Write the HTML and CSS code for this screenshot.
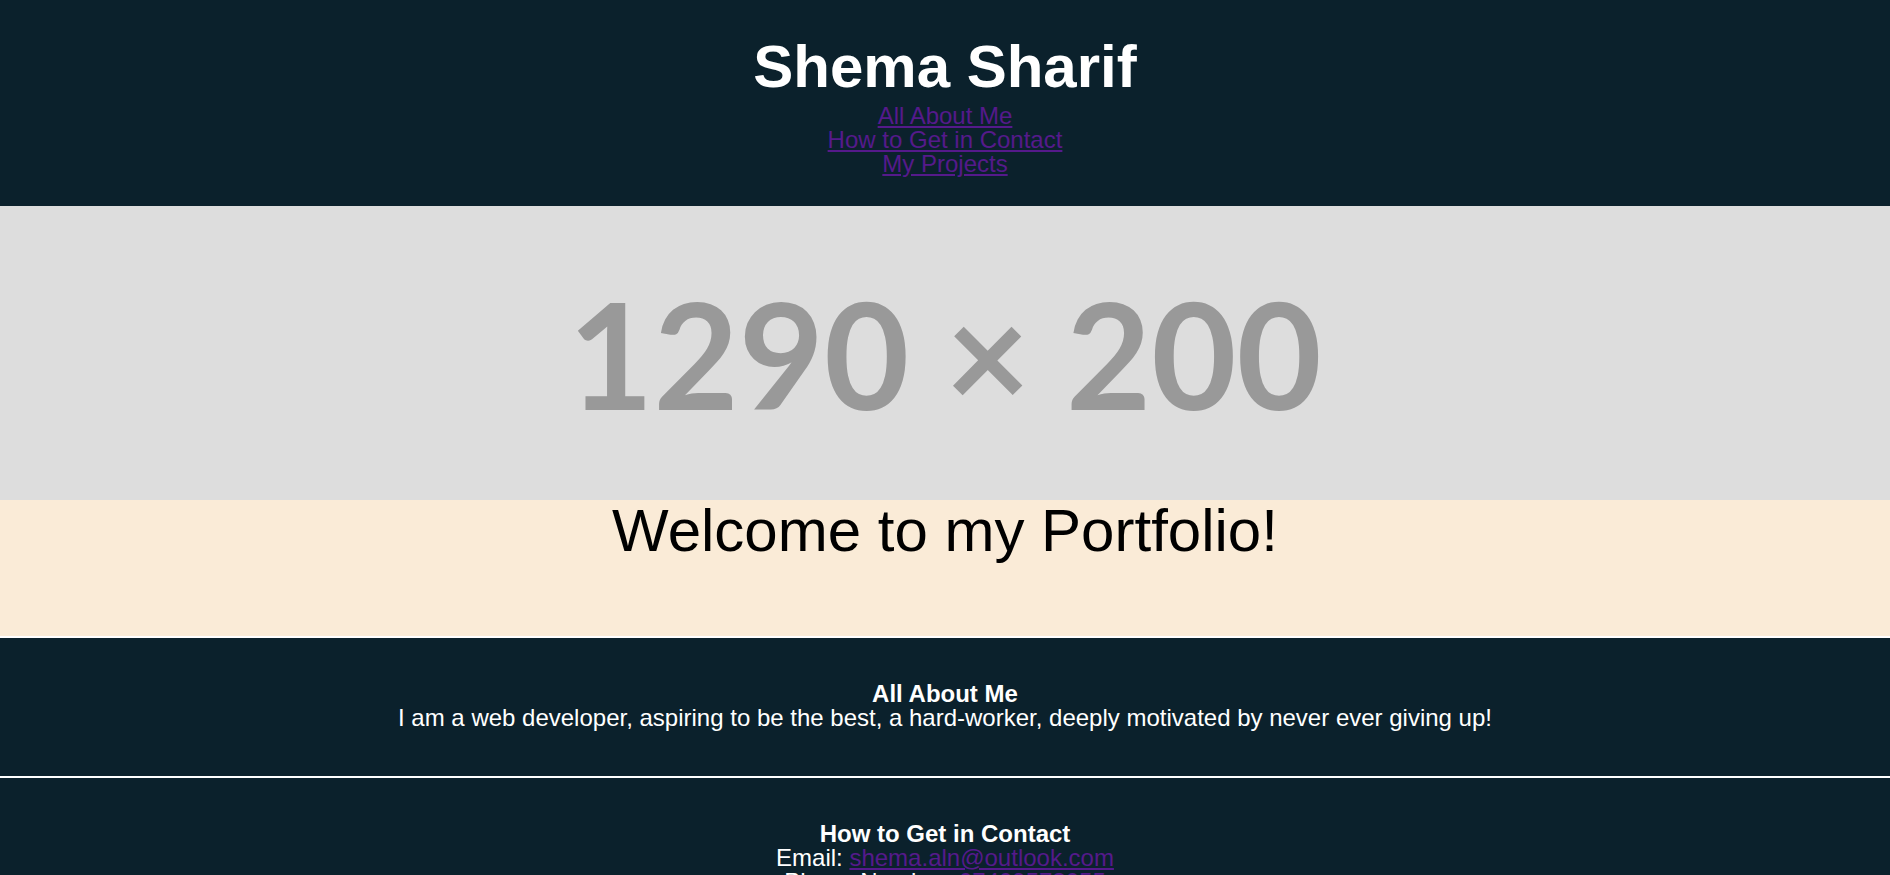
FILE: index.html
```html
<!DOCTYPE html>
<html lang="en">
<head>
<meta charset="utf-8">
<title>Shema Sharif</title>
<link rel="stylesheet" href="styles.css">
</head>
<body>
<header class="site-header">
  <h1 class="site-title">Shema Sharif</h1>
  <nav class="site-nav">
    <a class="nav-link" href="#about">All About Me</a>
    <a class="nav-link" href="#contact">How to Get in Contact</a>
    <a class="nav-link" href="#projects">My Projects</a>
  </nav>
</header>
<div class="banner"><span class="banner-text">1290 × 200</span></div>
<section class="welcome">
  <h2 class="welcome-title">Welcome to my Portfolio!</h2>
</section>
<section class="panel" id="about">
  <h3 class="panel-title">All About Me</h3>
  <p class="panel-text">I am a web developer, aspiring to be the best, a hard-worker, deeply motivated by never ever giving up!</p>
</section>
<section class="panel" id="contact">
  <h3 class="panel-title">How to Get in Contact</h3>
  <p class="panel-text">Email: <a class="panel-link" href="#">shema.aln@outlook.com</a></p>
  <p class="panel-text">Phone Number: <a class="panel-link" href="#">07409573055</a></p>
</section>
<section class="panel" id="projects">
  <h3 class="panel-title">My Projects</h3>
</section>
</body>
</html>
```

FILE: styles.css
```css
html, body {
  margin: 0;
  padding: 0;
}
body {
  font-family: "Liberation Sans", Arial, sans-serif;
  font-size: 24px;
  line-height: 1;
  color: #ffffff;
  background: #0b212c;
  text-align: center;
}
.site-header {
  background: #0b212c;
  padding: 37px 0 30px;
}
.site-title {
  margin: 0;
  font-size: 60px;
  line-height: 60px;
  font-weight: bold;
  color: #ffffff;
}
.site-nav {
  margin-top: 7px;
  display: flex;
  flex-direction: column;
  align-items: center;
}
.nav-link, .panel-link {
  color: #551a8b;
  text-decoration: underline;
}
.banner {
  background: #dddddd;
  height: 294px;
  width: 100%;
  display: flex;
  align-items: center;
  justify-content: center;
}
.banner-text {
  font-family: Lato, sans-serif;
  font-weight: bold;
  font-size: 147px;
  line-height: 1;
  color: #999999;
}
.welcome {
  background: #faebd7;
  color: #000000;
  padding: 1px 0 75px;
  border-bottom: 2px solid #ffffff;
}
.welcome-title {
  margin: 0;
  font-size: 60px;
  line-height: 60px;
  font-weight: normal;
}
.panel {
  padding: 44px 0 46px;
  border-bottom: 2px solid #ffffff;
}
.panel-title {
  margin: 0;
  font-size: 24px;
  font-weight: bold;
}
.panel-text {
  margin: 0;
}
```
